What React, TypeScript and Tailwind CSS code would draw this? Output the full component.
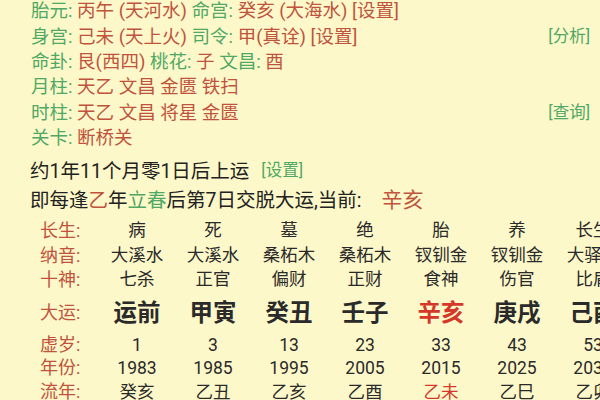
import React from 'react';

const green = 'text-[#4fa865]';
const red = 'text-[#c0533d]';

const cols = [
  { zs: '病', ny: '大溪水', ss: '七杀', dy: '运前', age: '1', year: '1983', ln: '癸亥' },
  { zs: '死', ny: '大溪水', ss: '正官', dy: '甲寅', age: '3', year: '1985', ln: '乙丑' },
  { zs: '墓', ny: '桑柘木', ss: '偏财', dy: '癸丑', age: '13', year: '1995', ln: '乙亥' },
  { zs: '绝', ny: '桑柘木', ss: '正财', dy: '壬子', age: '23', year: '2005', ln: '乙酉' },
  { zs: '胎', ny: '钗钏金', ss: '食神', dy: '辛亥', age: '33', year: '2015', ln: '乙未', current: true },
  { zs: '养', ny: '钗钏金', ss: '伤官', dy: '庚戌', age: '43', year: '2025', ln: '乙巳' },
  { zs: '长生', ny: '大驿土', ss: '比肩', dy: '己酉', age: '53', year: '2035', ln: '乙卯' },
];

function InfoLine({ children, action }: { children: React.ReactNode; action?: string }) {
  return (
    <div className="flex items-center justify-between h-[25.3px] whitespace-nowrap">
      <div>{children}</div>
      {action && <span className={`${green} text-[16.5px] pr-[10px]`}>[{action}]</span>}
    </div>
  );
}

function L({ t }: { t: string }) {
  return <span className={green}>{t}: </span>;
}

function V({ t }: { t: string }) {
  return <span className={red}>{t}</span>;
}

type Key = 'zs' | 'ny' | 'ss' | 'dy' | 'age' | 'year' | 'ln';

function Row({ label, k, h, big }: { label: string; k: Key; h: string; big?: boolean }) {
  return (
    <div className={`flex items-center ${h}`}>
      <div className={`w-[99px] shrink-0 pl-[40px] ${red} text-[18px]`}>{label}:</div>
      {cols.map((c, i) => (
        <div
          key={i}
          className={`w-[76px] shrink-0 text-center whitespace-nowrap ${
            big ? 'text-[23.5px] font-bold' : 'text-[17.5px]'
          } ${c.current && (k === 'dy' || k === 'ln') ? 'text-[#d4382a]' : 'text-[#2a2a2a]'}`}
        >
          {c[k]}
        </div>
      ))}
    </div>
  );
}

export default function App() {
  return (
    <div
      className="w-[600px] h-[400px] overflow-hidden bg-[#fdf8c9] text-[18.5px] leading-none"
      style={{ fontFamily: 'Roboto, "Noto Sans CJK SC", sans-serif' }}
    >
      <div className="pl-[31px] -mt-[1px]">
        <InfoLine>
          <L t="胎元" /><V t="丙午 (天河水) " /><L t="命宫" /><V t="癸亥 (大海水) [设置]" />
        </InfoLine>
        <InfoLine action="分析">
          <L t="身宫" /><V t="己未 (天上火) " /><L t="司令" /><V t="甲(真诠) [设置]" />
        </InfoLine>
        <InfoLine>
          <L t="命卦" /><V t="艮(西四) " /><L t="桃花" /><V t="子 " /><L t="文昌" /><V t="酉" />
        </InfoLine>
        <InfoLine>
          <L t="月柱" /><V t="天乙 文昌 金匮 铁扫" />
        </InfoLine>
        <InfoLine action="查询">
          <L t="时柱" /><V t="天乙 文昌 将星 金匮" />
        </InfoLine>
        <InfoLine>
          <L t="关卡" /><V t="断桥关" />
        </InfoLine>
      </div>

      <div className="pl-[30px] mt-[6px] text-[19.5px] text-[#222]">
        <div className="h-[29px] flex items-center whitespace-nowrap">
          约1年11个月零1日后上运
          <span className={`${green} text-[16.5px] ml-[12px]`}>[设置]</span>
        </div>
        <div className="h-[29px] flex items-center whitespace-nowrap">
          即每逢<span className={red}>乙</span>年<span className={green}>立春</span>后第7日交脱大运,当前:
          <span className={`${red} text-[21px] ml-[20px]`}>辛亥</span>
        </div>
      </div>

      <div className="mt-[4px]">
        <Row label="长生" k="zs" h="h-[24.5px]" />
        <Row label="纳音" k="ny" h="h-[24.5px]" />
        <Row label="十神" k="ss" h="h-[24.5px]" />
        <Row label="大运" k="dy" h="h-[42px]" big />
        <Row label="虚岁" k="age" h="h-[22px]" />
        <Row label="年份" k="year" h="h-[24px]" />
        <Row label="流年" k="ln" h="h-[24px]" />
      </div>
    </div>
  );
}
